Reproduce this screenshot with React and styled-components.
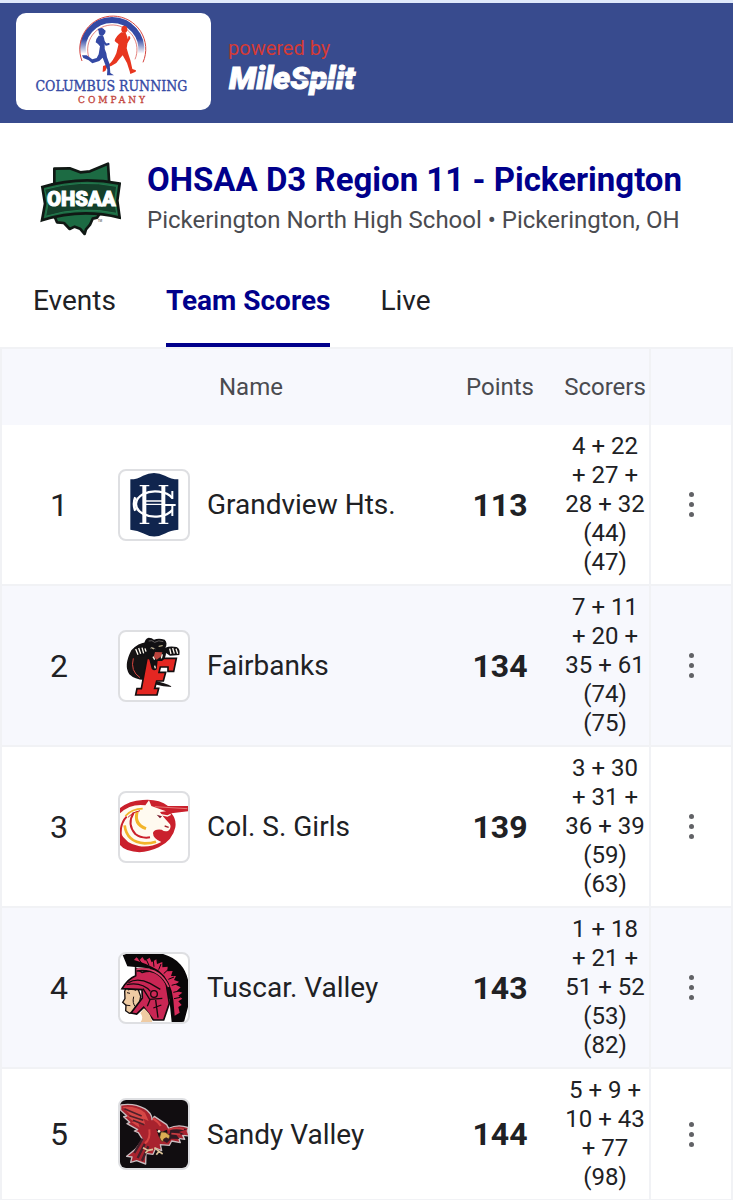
import React from "react";
import styled, { createGlobalStyle } from "styled-components";

const GlobalStyle = createGlobalStyle`
  * { box-sizing: border-box; }
  body {
    margin: 0;
    background: #ffffff;
    color: #202124;
    font-family: Roboto, "Liberation Sans", sans-serif;
  }
`;

const TopBar = styled.header`
  display: flex;
  align-items: flex-start;
  gap: 17px;
  padding: 10px 16px 13px;
  background: #384b8e;
  border-top: 3px solid #dfe9fb;
`;

const SponsorCard = styled.a`
  display: flex;
  width: 195px;
  height: 97px;
  border-radius: 10px;
  background: #ffffff;
  overflow: hidden;
`;

const PoweredBy = styled.a`
  display: flex;
  flex-direction: column;
  padding-top: 23px;
  color: #d43a35;
  font-size: 20px;
  line-height: 24px;
  text-decoration: none;

  svg { overflow: visible; }
`;

const Meet = styled.section`
  display: flex;
  align-items: center;
  gap: 26px;
  padding: 36px 32px 0 40px;

  svg { flex: none; }
`;

const MeetTitle = styled.h1`
  margin: 0;
  color: #00008b;
  font-size: 33px;
  font-weight: 700;
  line-height: 42px;
`;

const MeetPlace = styled.p`
  margin: 0;
  color: #4a4b50;
  font-size: 24px;
  line-height: 38px;
`;

const Tabs = styled.nav`
  display: flex;
  gap: 50px;
  padding: 16px 33px 0;
`;

const Tab = styled.a`
  height: 92px;
  padding-top: 28px;
  border-bottom: 4px solid ${(p) => (p.$active ? "#00008b" : "transparent")};
  color: ${(p) => (p.$active ? "#00008b" : "#202124")};
  font-size: 28px;
  font-weight: ${(p) => (p.$active ? 700 : 400)};
  line-height: 36px;
  text-decoration: none;
`;

const ScoreTable = styled.table`
  width: 100%;
  table-layout: fixed;
  border-collapse: separate;
  border-spacing: 0;
  border: solid #f1f2f5;
  border-width: 2px 2px 0;
`;

const Col = styled.col`
  width: ${(p) => (p.$w ? `${p.$w}px` : "auto")};
`;

const Row = styled.tr`
  background: ${(p) => (p.$shaded ? "#f7f8fd" : "#ffffff")};
`;

const HeadCell = styled.th`
  height: 76px;
  padding: 0 ${(p) => (p.$pad ? "12px" : "0")};
  color: #4a4b50;
  font-size: 24px;
  font-weight: 400;
  text-align: ${(p) => p.$align || "center"};
  border-left: ${(p) => (p.$ruled ? "2px solid #f1f2f5" : "0")};
`;

const Cell = styled.td`
  padding: 0;
  border-bottom: 2px solid #f1f2f5;
  border-left: ${(p) => (p.$ruled ? "2px solid #f1f2f5" : "0")};
  text-align: center;
  vertical-align: middle;
`;

const RankCell = styled(Cell)`
  font-size: 32px;
`;

const BadgeCell = styled(Cell)`
  padding-left: 2px;
  text-align: left;
`;

const NameCell = styled(Cell)`
  font-size: 28px;
  text-align: left;
`;

const PointsCell = styled(Cell)`
  font-size: 32px;
  font-weight: 700;
`;

const ScorersCell = styled(Cell)`
  padding: 7px 2px;
  font-size: 24px;
  line-height: 29px;
`;

const MenuButton = styled.button`
  display: inline-flex;
  align-items: center;
  justify-content: center;
  width: 48px;
  height: 48px;
  padding: 0;
  border: 0;
  background: transparent;
  color: #616266;
  vertical-align: middle;
`;

const BadgeFrame = styled.span`
  display: block;
  width: 72px;
  height: 72px;
  border: 2px solid #dedfe2;
  border-radius: 8px;
  background: #ffffff;
  overflow: hidden;

  svg { display: block; }
`;

function SponsorLogo() {
  return (
    <svg width="195" height="97" viewBox="18 24 585 291" role="img" aria-label="Columbus Running Company">
      <defs>
        <linearGradient id="archFade" x1="0" y1="30" x2="0" y2="146" gradientUnits="userSpaceOnUse">
          <stop offset="0.62" stopColor="#3449a4" />
          <stop offset="1" stopColor="#3449a4" stopOpacity="0" />
        </linearGradient>
      </defs>
      <g fill="none">
        <path d="M219 146 A88 88 0 1 1 393 146" stroke="url(#archFade)" strokeWidth="18" />
        <path d="M216 168 A99 99 0 1 1 399 172" stroke="#d5443f" strokeWidth="3" />
        <path d="M237 158 A74 74 0 1 1 375 163" stroke="#d5443f" strokeWidth="2" />
      </g>
      <g fill="#e8361f">
        <ellipse cx="343" cy="73" rx="9" ry="11" />
        <path d="M334 82 L347 83 Q354 94 353 111 L350 130 Q355 149 361 165 L367 192 L378 196 L377 200 L361 207 L359 199 L351 174 L338 151 Q327 163 319 174 Q305 184 291 187 L286 198 L278 201 L279 183 L299 176 Q309 168 319 145 L326 116 L320 113 L314 108 Q317 94 334 82 Z" />
        <path d="M319 106 L332 120 M349 99 L351 111 L358 100 L357 94" fill="none" stroke="#e8361f" strokeWidth="6" strokeLinejoin="round" />
      </g>
      <g fill="#3449a4">
        <ellipse cx="275" cy="81" rx="9" ry="11" />
        <path d="M263 72 L275 69 L287 77 L285 86 L268 82 Z M266 92 L278 91 Q285 101 284 119 Q282 130 289 145 L291 157 L299 178 L301 204 L312 211 L291 211 L292 194 L285 177 L278 158 L268 168 L247 175 L236 166 L220 159 L216 151 L230 151 L247 163 L260 159 L266 148 L270 123 L265 117 L257 112 Q257 101 266 92 Z" />
        <path d="M262 110 L274 123 M280 108 L288 119 L296 117" fill="none" stroke="#3449a4" strokeWidth="6" strokeLinejoin="round" strokeLinecap="round" />
      </g>
      <text x="304" y="258" textAnchor="middle" fontFamily="'DejaVu Serif Condensed','DejaVu Serif',serif" fontSize="42" fill="#3449a4" stroke="#3449a4" strokeWidth="1">COLUMBUS RUNNING</text>
      <text x="309" y="295" textAnchor="middle" fontFamily="'DejaVu Serif Condensed','DejaVu Serif',serif" fontSize="30" letterSpacing="9" fill="#c4483f" stroke="#c4483f" strokeWidth="1">COMPANY</text>
    </svg>
  );
}

function MileSplitLogo() {
  return (
    <svg width="136" height="40" viewBox="0 0 136 40" role="img" aria-label="MileSplit">
      <text x="1" y="29" fontFamily="Roboto, sans-serif" fontWeight="900" fontStyle="italic" fontSize="32" fill="#ffffff" stroke="#ffffff" strokeWidth="1">MileSplit</text>
      <path d="M64 20 H130" stroke="#384b8e" strokeWidth="1" />
    </svg>
  );
}

function OhsaaLogo() {
  return (
    <svg width="81" height="78" viewBox="30 20 243 234" role="img" aria-label="OHSAA">
      <path d="M73 46 L119 45 L151 57 L180 54 L234 31 L238 95 L222 166 L211 178 L201 193 L188 196 L180 214 L168 228 L164 242 L150 226 L134 220 L119 227 L102 209 L81 207 L73 188 Z" fill="#1c6b43" stroke="#101814" strokeWidth="8" strokeLinejoin="round" />
      <path d="M37 101 Q150 67 269 91 L262 142 L269 193 Q153 164 36 201 L45 151 Z" fill="#1c6b43" stroke="#101814" strokeWidth="8" strokeLinejoin="miter" />
      <path d="M44 108 Q151 77 260 99 L254 143 L260 180 Q153 156 47 189 L54 151 Z" fill="#14402b" stroke="#24794e" strokeWidth="3" />
      <text x="154" y="159" textAnchor="middle" fontFamily="Roboto, sans-serif" fontWeight="900" fontSize="61" fill="#ffffff" stroke="#ffffff" strokeWidth="3">OHSAA</text>
      <text x="203" y="206" fontFamily="Roboto, sans-serif" fontSize="9" fill="#333333">TM</text>
    </svg>
  );
}

function ShieldBadge() {
  return (
    <svg width="68" height="68" viewBox="30 33 204 204" aria-hidden="true">
      <path d="M61 58 Q83 58 99 47 Q132 31 165 47 Q183 58 205 58 V209 Q181 211 167 220 Q132 239 99 220 Q83 211 61 209 Z" fill="#10254e" />
      <g fill="none" stroke="#ffffff">
        <path d="M187 114 A58 38 0 1 0 187 150" strokeWidth="7" />
        <path d="M76 112 Q68 132 76 152" strokeWidth="8" />
        <path d="M164 135 H197 M187 135 V168 M187 93 V117" strokeWidth="6" />
        <path d="M103 78 V190 M160 78 V190" strokeWidth="12" />
        <path d="M89 77 H118 M146 77 H175 M89 190 H118 M146 190 H175 M103 123 H160 M103 133 H160" strokeWidth="4" />
      </g>
    </svg>
  );
}

function PantherBadge() {
  return (
    <svg width="68" height="68" viewBox="30 33 204 204" aria-hidden="true">
      <path d="M64 88 Q40 134 58 160 Q74 176 103 177 L112 130 L122 100 L110 64 Q84 66 64 88 Z" fill="#161314" />
      <path d="M70 112 Q60 150 90 170" fill="none" stroke="#d84640" strokeWidth="3" />
      <path d="M137 181 Q162 184 188 198 Q158 198 134 190 Z" fill="#161314" />
      <path d="M111 112 H199 L191 151 H174 V138 H151 L147 154 H167 L160 180 H140 L134 202 H146 L141 222 H77 L81 203 H94 Z" fill="#e42722" stroke="#160f10" strokeWidth="5" />
      <path d="M72 82 Q86 70 102 72 Q104 52 116 50 Q126 50 132 56 Q146 50 164 56 Q174 66 166 80 Q180 74 200 78 Q212 84 208 102 L180 104 L168 96 Q168 112 156 120 L143 120 L140 145 Q132 152 125 143 L118 116 L106 99 L101 108 L79 103 Z" fill="#111012" />
      <path d="M116 60 Q126 56 134 64 Q146 56 160 62 M120 82 Q128 76 136 84" fill="none" stroke="#8b8583" strokeWidth="2" />
      <path d="M146 76 L158 74 M124 80 L132 84" stroke="#e9d9a8" strokeWidth="3" />
      <path d="M135 93 L157 94 L154 106 L140 116 L131 108 Z" fill="#bc453e" />
      <path d="M129 107 L134 116 M157 100 L154 112 M134 134 L136 142" stroke="#fff8e9" strokeWidth="4" />
      <path d="M77 84 L84 101 M86 81 L92 98 M96 80 L101 97 M105 82 L108 92 M179 83 L183 99 M188 81 L193 98 M198 83 L203 98" stroke="#fffaf0" strokeWidth="4" />
    </svg>
  );
}

function UnicornBadge() {
  return (
    <svg width="68" height="68" viewBox="30 33 204 204" aria-hidden="true">
      <path d="M28 80 Q56 56 98 54 Q146 50 174 72 L240 72 V87 L184 94 Q200 112 196 136 Q188 176 146 196 Q96 220 52 204 Q36 198 28 186 Z" fill="#ca202c" />
      <path d="M28 96 Q60 64 106 70 L117 55 L124 72 L168 88 L150 90 L160 104 L180 127 Q185 139 175 146 Q165 151 155 143 Q134 140 129 152 Q128 170 154 180 Q118 198 86 192 Q46 186 28 146 Z" fill="#fffaf0" />
      <path d="M134 74 L232 80" stroke="#f3a49b" strokeWidth="2" />
      <path d="M152 98 L172 102 L182 97" fill="none" stroke="#fffaf0" strokeWidth="4" />
      <path d="M140 98 L156 103 L150 109 Z" fill="#75182b" />
      <path d="M164 132 L176 136" stroke="#a5222b" strokeWidth="4" />
      <g fill="none" stroke="#f2b42b">
        <path d="M46 102 Q66 80 98 80" strokeWidth="5" />
        <path d="M44 130 Q50 180 104 184 Q124 184 138 179" strokeWidth="8" />
        <path d="M82 88 Q70 126 108 140" strokeWidth="9" />
      </g>
      <g fill="none" stroke="#ca202c">
        <path d="M54 106 Q66 90 90 86" strokeWidth="3" />
        <path d="M71 92 Q50 126 76 156 Q94 170 120 166" strokeWidth="6" />
        <path d="M33 166 Q28 126 50 104" strokeWidth="6" />
      </g>
    </svg>
  );
}

function TrojanBadge() {
  return (
    <svg width="68" height="68" viewBox="30 33 204 204" aria-hidden="true">
      <path d="M38 36 L67 27 Q172 18 212 65 Q242 99 239 173 L222 237 H185 L176 151 Q164 96 116 76 L52 70 Z" fill="#090708" />
      <path d="M72 51 L79 43 L89 51 L97 42 L105 53 L119 44 L125 58 L139 49 L141 63 L157 57 L157 73 L173 71 L172 85 L188 84 L183 99 L198 99 L192 111 L207 116 L197 125 L212 133 L201 143 L217 149 L205 158 L217 167 L205 175 L215 186 L205 192 L209 209 L194 218 L190 171 Q183 111 145 82 Q105 59 72 51 Z" fill="#d52b5a" />
      <g fill="none" stroke="#090708" strokeWidth="3">
        <path d="M86 48 L95 61 M109 50 L117 67 M130 54 L132 71 M153 63 L146 80 M174 80 L161 92 M192 102 L175 109 M204 122 L185 127 M212 143 L190 148 M211 163 L192 167" />
      </g>
      <path d="M51 126 L44 145 L45 167 L38 178 L48 187 L47 203 L58 211 L84 204 L92 160 L83 134 Z" fill="#efcba3" stroke="#171010" strokeWidth="4" />
      <path d="M45 186 L61 188 M54 141 Q66 133 78 142 M51 149 L60 151 M71 161 Q66 181 77 192" fill="none" stroke="#1b1011" strokeWidth="3" />
      <path d="M77 98 Q54 107 36 137 L96 140 L97 165 L63 210 L80 213 L101 193 L130 231 H161 L178 181 L169 124 Q149 72 96 88 L77 75 Z" fill="#c92654" stroke="#10090c" strokeWidth="5" />
      <path d="M80 82 Q145 70 172 125 L181 167" fill="none" stroke="#150b0e" strokeWidth="9" />
      <path d="M79 79 Q148 70 176 132" fill="none" stroke="#dd426b" strokeWidth="5" />
      <path d="M50 125 Q96 116 121 145 M55 119 Q83 103 120 121 L151 139 M99 137 L119 169 L157 166 M120 170 L112 190 M137 171 L144 224 M130 195 L154 186" fill="none" stroke="#13090c" strokeWidth="4" />
      <circle cx="132" cy="153" r="10" fill="#ce2856" stroke="#13090c" strokeWidth="4" />
      <path d="M102 196 Q124 214 127 239 L92 237 Q102 222 91 211 Z" fill="#efcba3" />
    </svg>
  );
}

function CardinalBadge() {
  return (
    <svg width="68" height="68" viewBox="30 33 204 204" aria-hidden="true">
      <rect x="24" y="27" width="216" height="216" fill="#110d10" />
      <path d="M32 48 Q71 41 104 59 Q126 72 126 92 L133 82 L170 107 L176 118 Q205 104 235 116 L232 126 L237 141 L218 139 L224 151 L206 148 L211 161 L185 156 L178 169 L151 167 L155 185 L137 177 L129 196 L108 193 L107 225 L80 215 L62 220 L66 204 L50 202 L76 181 L98 152 L85 131 L73 126 L83 122 L51 104 L59 100 L41 83 L51 81 L32 64 Z" fill="#a8232e" stroke="#c9bcbf" strokeWidth="4" strokeLinejoin="round" />
      <path d="M38 54 Q79 50 105 71 L116 96 L101 89 L106 107 L85 101 L89 116 L64 99 L73 99 L49 80 L65 82 Z" fill="#d54745" />
      <path d="M43 59 L95 81 M58 80 L100 94 M69 94 L103 107" stroke="#50202a" strokeWidth="5" />
      <path d="M98 149 L73 192 M104 165 L83 207 M115 172 L96 215" stroke="#43202a" strokeWidth="7" />
      <path d="M139 120 L156 128 L171 122 L174 143 L159 151 L147 145 Z" fill="#171014" />
      <path d="M151 151 Q182 147 181 122 L205 116 L231 121 L207 129 L223 136 L199 138 L209 150 L184 149 L171 162 Z" fill="#321922" />
      <path d="M174 122 Q197 115 222 121 M184 134 L211 136" fill="none" stroke="#c63a3f" strokeWidth="5" />
      <path d="M153 129 Q166 126 180 140 L176 150 Q169 142 161 150 L158 159 Q151 154 149 145 Z" fill="#dcae53" stroke="#49321e" strokeWidth="2" />
      <circle cx="147" cy="127" r="4" fill="#fff5db" />
      <path d="M99 176 L114 184 L106 192 M114 184 L129 181 M133 176 L147 187 L139 197 M147 187 L158 195" fill="none" stroke="#dcc49a" strokeWidth="5" />
      <path d="M128 88 Q145 98 152 111 M118 121 Q122 151 105 163" fill="none" stroke="#d84443" strokeWidth="6" />
    </svg>
  );
}

const teams = [
  { rank: 1, name: "Grandview Hts.", points: 113, scorers: "4 + 22 + 27 + 28 + 32 (44) (47)", Badge: ShieldBadge },
  { rank: 2, name: "Fairbanks", points: 134, scorers: "7 + 11 + 20 + 35 + 61 (74) (75)", Badge: PantherBadge },
  { rank: 3, name: "Col. S. Girls", points: 139, scorers: "3 + 30 + 31 + 36 + 39 (59) (63)", Badge: UnicornBadge },
  { rank: 4, name: "Tuscar. Valley", points: 143, scorers: "1 + 18 + 21 + 51 + 52 (53) (82)", Badge: TrojanBadge },
  { rank: 5, name: "Sandy Valley", points: 144, scorers: "5 + 9 + 10 + 43 + 77 (98)", Badge: CardinalBadge },
];

export default function App() {
  return (
    <>
      <GlobalStyle />
      <TopBar>
        <SponsorCard href="#sponsor"><SponsorLogo /></SponsorCard>
        <PoweredBy href="#milesplit">
          powered by
          <MileSplitLogo />
        </PoweredBy>
      </TopBar>
      <main>
        <Meet>
          <OhsaaLogo />
          <div>
            <MeetTitle>OHSAA D3 Region 11 - Pickerington</MeetTitle>
            <MeetPlace>Pickerington North High School • Pickerington, OH</MeetPlace>
          </div>
        </Meet>
        <Tabs>
          <Tab href="#events">Events</Tab>
          <Tab href="#scores" $active aria-current="page">Team Scores</Tab>
          <Tab href="#live">Live</Tab>
        </Tabs>
        <ScoreTable>
          <colgroup>
            <Col $w={114} />
            <Col $w={91} />
            <Col />
            <Col $w={122} />
            <Col $w={88} />
            <Col $w={82} />
          </colgroup>
          <thead>
            <Row $shaded>
              <HeadCell />
              <HeadCell />
              <HeadCell $align="left" $pad>Name</HeadCell>
              <HeadCell>Points</HeadCell>
              <HeadCell>Scorers</HeadCell>
              <HeadCell $ruled />
            </Row>
          </thead>
          <tbody>
            {teams.map(({ rank, name, points, scorers, Badge }) => (
              <Row key={rank} $shaded={rank % 2 === 0}>
                <RankCell>{rank}</RankCell>
                <BadgeCell><BadgeFrame><Badge /></BadgeFrame></BadgeCell>
                <NameCell>{name}</NameCell>
                <PointsCell>{points}</PointsCell>
                <ScorersCell>{scorers}</ScorersCell>
                <Cell $ruled>
                  <MenuButton type="button" aria-label={`More about ${name}`}>
                    <svg width="5" height="25" viewBox="0 0 5 25" fill="currentColor" aria-hidden="true">
                      <circle cx="2.5" cy="2.5" r="2.5" />
                      <circle cx="2.5" cy="12.5" r="2.5" />
                      <circle cx="2.5" cy="22.5" r="2.5" />
                    </svg>
                  </MenuButton>
                </Cell>
              </Row>
            ))}
          </tbody>
        </ScoreTable>
      </main>
    </>
  );
}
